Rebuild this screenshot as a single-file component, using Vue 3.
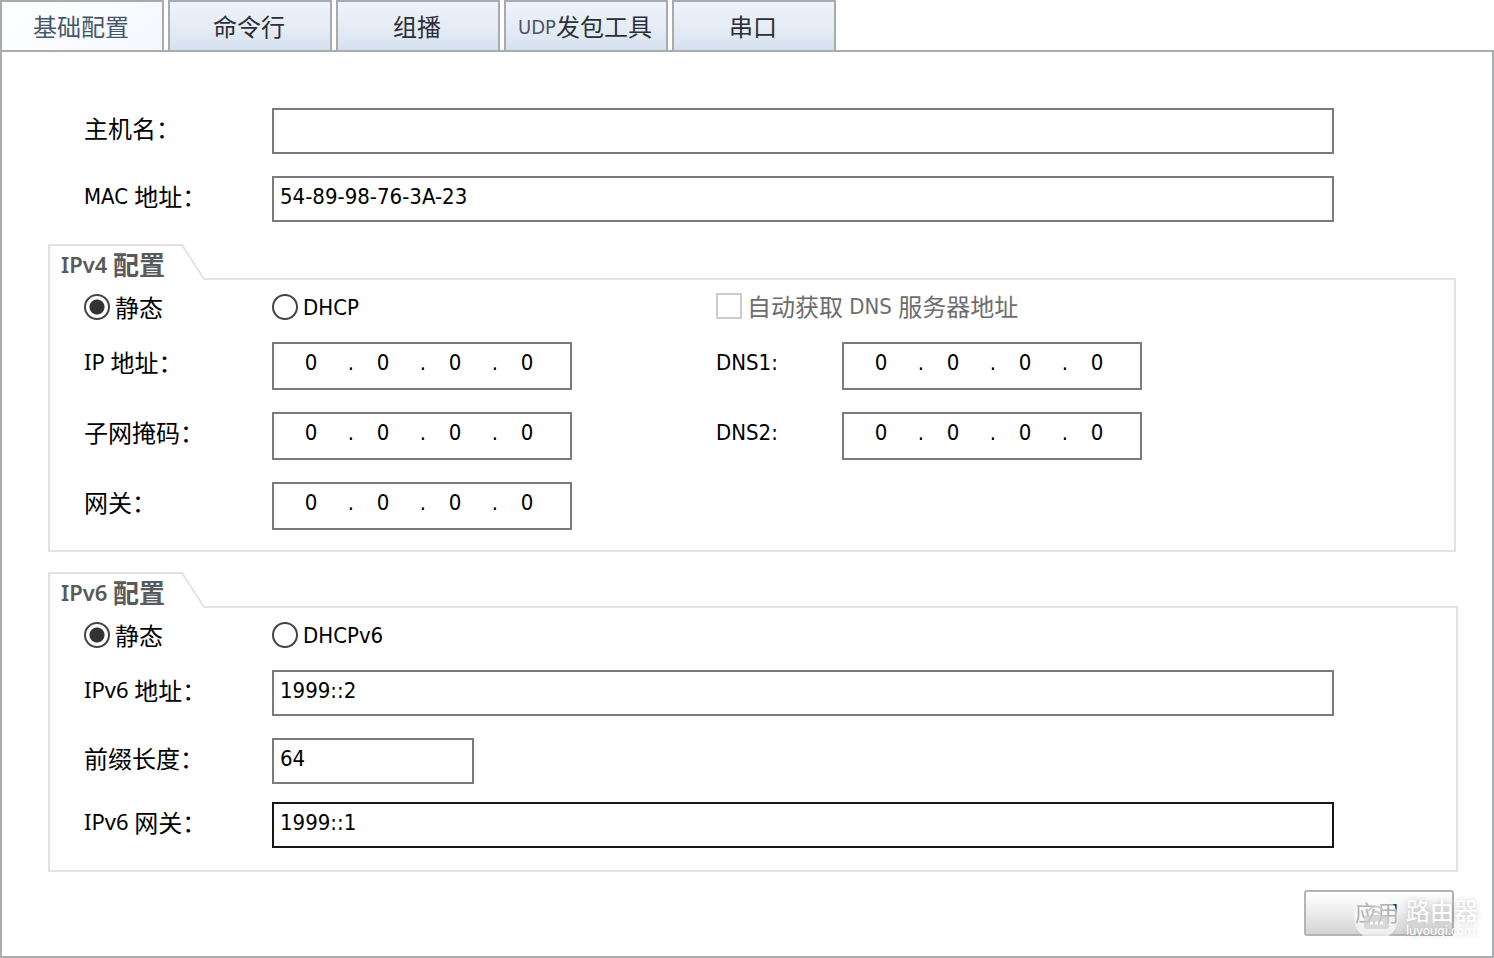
<script setup>
import { reactive, ref } from 'vue'

const tabs = [
  { latin: '', text: '基础配置' },
  { latin: '', text: '命令行' },
  { latin: '', text: '组播' },
  { latin: 'UDP', text: '发包工具' },
  { latin: '', text: '串口' },
]
const activeTab = ref(0)

const form = reactive({
  host: '',
  mac: '54-89-98-76-3A-23',
  v4Mode: 'static',
  autoDns: false,
  v6Mode: 'static',
  v6Address: '1999::2',
  v6Prefix: '64',
  v6Gateway: '1999::1',
})

const v4Fields = reactive([
  { id: 'ip', latin: 'IP ', text: '地址：', value: ['0', '0', '0', '0'] },
  { id: 'dns1', latin: 'DNS1:', text: '', value: ['0', '0', '0', '0'] },
  { id: 'mask', latin: '', text: '子网掩码：', value: ['0', '0', '0', '0'] },
  { id: 'dns2', latin: 'DNS2:', text: '', value: ['0', '0', '0', '0'] },
  { id: 'gateway', latin: '', text: '网关：', value: ['0', '0', '0', '0'] },
])
</script>

<template>
  <div class="page">
    <nav class="tabs">
      <button
        v-for="(tab, i) in tabs"
        :key="tab.text"
        type="button"
        class="tab"
        :class="{ active: i === activeTab }"
        @click="activeTab = i"
      ><span v-if="tab.latin" class="latin">{{ tab.latin }}</span>{{ tab.text }}</button>
    </nav>

    <form class="panel" @submit.prevent>
      <div class="rows general">
        <div class="row">
          <label for="host">主机名：</label>
          <input id="host" v-model="form.host" class="field" type="text">
        </div>
        <div class="row">
          <label for="mac"><span class="latin">MAC </span>地址：</label>
          <input id="mac" v-model="form.mac" class="field" type="text">
        </div>
      </div>

      <section class="group narrow">
        <div class="group-head">
          <h2 class="group-tab">
            <svg class="outline" viewBox="0 0 157 36" aria-hidden="true"><path d="M1 36V1H134L156 35H157" /></svg>
            <span class="title"><span class="serifed">IPv4 </span>配置</span>
          </h2>
        </div>
        <div class="group-body v4">
          <label class="choice"><input v-model="form.v4Mode" type="radio" name="v4" value="static">静态</label>
          <label class="choice"><input v-model="form.v4Mode" type="radio" name="v4" value="dhcp"><span class="latin">DHCP</span></label>
          <label class="choice dim"><input v-model="form.autoDns" type="checkbox" disabled><span>自动获取<span class="latin"> DNS </span>服务器地址</span></label>
          <template v-for="f in v4Fields" :key="f.id">
            <label :for="f.id"><span v-if="f.latin" :class="f.id === 'ip' ? 'serifed' : 'latin'">{{ f.latin }}</span>{{ f.text }}</label>
            <div class="ip-box">
              <template v-for="(part, i) in f.value" :key="i">
                <span v-if="i" class="dot">.</span>
                <input :id="i ? `${f.id}-${i}` : f.id" v-model="f.value[i]" type="text" maxlength="3" :aria-label="`${f.latin}${f.text} ${i + 1}`">
              </template>
            </div>
          </template>
        </div>
      </section>

      <section class="group">
        <div class="group-head">
          <h2 class="group-tab">
            <svg class="outline" viewBox="0 0 157 36" aria-hidden="true"><path d="M1 36V1H134L156 35H157" /></svg>
            <span class="title"><span class="serifed">IPv6 </span>配置</span>
          </h2>
        </div>
        <div class="group-body v6">
          <div class="modes">
            <label class="choice"><input v-model="form.v6Mode" type="radio" name="v6" value="static">静态</label>
            <label class="choice"><input v-model="form.v6Mode" type="radio" name="v6" value="dhcp"><span class="latin">DHCPv6</span></label>
          </div>
          <div class="rows">
            <div class="row">
              <label for="v6-address"><span class="serifed">IPv6 </span>地址：</label>
              <input id="v6-address" v-model="form.v6Address" class="field" type="text">
            </div>
            <div class="row">
              <label for="v6-prefix">前缀长度：</label>
              <input id="v6-prefix" v-model="form.v6Prefix" class="field short" type="text">
            </div>
            <div class="row">
              <label for="v6-gateway"><span class="serifed">IPv6 </span>网关：</label>
              <input id="v6-gateway" v-model="form.v6Gateway" class="field current" type="text">
            </div>
          </div>
        </div>
      </section>

      <div class="actions">
        <button type="submit" class="apply">应用</button>
        <div class="brand">
          <svg class="badge" viewBox="0 0 44 44" aria-hidden="true">
            <circle cx="22" cy="22" r="22" fill="#fff" fill-opacity=".62" />
            <rect x="10" y="19" width="25" height="14" rx="3" fill="#ccc" fill-opacity=".7" />
            <path d="M14 15Q22 6 30 15M18 18Q22 13 26 18" fill="none" stroke="#ccc" stroke-width="2" />
            <path d="M16 27h3M21 27h3M26 27h3" stroke="#fff" stroke-width="3" />
          </svg>
          <div class="brand-text"><span class="brand-name">路由器</span><span class="brand-url">luyouqi.com</span></div>
        </div>
      </div>
    </form>
  </div>
</template>

<style>
body {
  margin: 0;
  background: #fff;
}
</style>

<style scoped>
.page {
  box-sizing: border-box;
  min-height: 100vh;
  display: flex;
  flex-direction: column;
  font-family: "Noto Sans CJK SC", sans-serif;
  font-size: 24px;
  line-height: 32px;
  color: #000;
  background: #fff;
}
.page * {
  box-sizing: border-box;
}
.latin,
.serifed {
  font-family: "DejaVu Sans Condensed", "DejaVu Sans", sans-serif;
  font-size: 22px;
  line-height: 24px;
  vertical-align: 2px;
  white-space: pre;
}
.serifed {
  font-family: "Noto Sans", sans-serif;
}
.tabs {
  display: flex;
  gap: 4px;
}
.tab {
  width: 164px;
  height: 50px;
  padding: 0 2px 0 0;
  border: 2px solid #a7abae;
  border-bottom: 0;
  background: linear-gradient(#eef3fb, #e4ebf4 60%, #d5e1f0);
  color: #2b3038;
  font: inherit;
  white-space: nowrap;
}
.tab.active {
  background: linear-gradient(135deg, #fff, #f4f8fd);
  color: #43586c;
}
.tab .latin {
  font-size: 20px;
  color: #4a5568;
}
.panel {
  flex: 1;
  border: 2px solid #a9adb0;
  padding: 56px 34px 18px 46px;
}
.rows {
  display: flex;
  flex-direction: column;
  gap: 22px;
}
.general {
  padding: 0 124px 0 36px;
  margin-bottom: 22px;
}
.row {
  display: flex;
}
.row label {
  flex: 0 0 188px;
  padding-top: 4px;
}
.field {
  flex: 1;
  min-width: 0;
  height: 46px;
  padding: 0 6px 6px;
  border: 2px solid #7a7a7a;
  border-radius: 0;
  outline: 0;
  background: #fff;
  color: #000;
  font-family: "DejaVu Sans Condensed", "DejaVu Sans", sans-serif;
  font-size: 22px;
}
.field.short {
  flex: 0 0 202px;
}
.field.current {
  border-color: #17171a;
}
.group {
  margin-bottom: 20px;
}
.group.narrow {
  margin-right: 2px;
}
.group-head {
  display: flex;
}
.group-head::after {
  content: "";
  flex: 1;
  border-bottom: 2px solid #e3e3e3;
}
.group-tab {
  position: relative;
  width: 157px;
  height: 36px;
  margin: 0;
  padding: 4px 0 0 13px;
  font-size: 26px;
  line-height: 32px;
  font-weight: 700;
  color: #5a5a5a;
  white-space: nowrap;
}
.group-tab .serifed {
  font-weight: 600;
}
.outline {
  position: absolute;
  inset: 0;
  width: 157px;
  height: 36px;
  fill: none;
  stroke: #e3e3e3;
  stroke-width: 2;
}
.group-body {
  border: 2px solid #e3e3e3;
  border-top: 0;
  padding: 0 122px 20px 34px;
}
.v4 {
  display: grid;
  grid-template-columns: 188px 444px 126px 300px;
  grid-template-rows: 40px;
  row-gap: 22px;
}
.v4 > label:not(.choice) {
  padding-top: 4px;
}
.choice {
  display: flex;
  align-items: center;
  white-space: nowrap;
}
.choice > .latin {
  padding-top: 2px;
}
.v4 > .choice {
  padding-top: 14px;
}
.v4 > .dim {
  grid-column: span 2;
  padding-top: 12px;
  color: #6d6d6d;
}
.choice input {
  appearance: none;
  width: 26px;
  height: 26px;
  margin: 0 5px 0 0;
  border: 2px solid #444;
  border-radius: 50%;
  background: #fff;
}
.choice input:checked {
  background: radial-gradient(circle, #333 7px, #fff 8px);
}
.choice input[type="checkbox"] {
  border-color: #ccc;
  border-radius: 0;
}
.ip-box {
  display: flex;
  align-items: center;
  width: 300px;
  height: 48px;
  padding: 0 0 6px 9px;
  border: 2px solid #7a7a7a;
  background: #fff;
  font-family: "DejaVu Sans Condensed", "DejaVu Sans", sans-serif;
  font-size: 22px;
}
.ip-box input {
  width: 64px;
  height: 32px;
  padding: 0 8px 0 0;
  border: 0;
  outline: 0;
  background: transparent;
  color: #000;
  font: inherit;
  text-align: center;
}
.dot {
  width: 8px;
  text-align: center;
}
.v6 {
  padding-bottom: 22px;
}
.modes {
  display: grid;
  grid-template-columns: 188px 1fr;
  height: 54px;
  margin-bottom: 8px;
}
.v6 .row:last-child {
  margin-top: -4px;
}
.actions {
  position: relative;
  display: flex;
  justify-content: flex-end;
  margin-top: -2px;
  padding-right: 4px;
}
.apply {
  width: 150px;
  height: 46px;
  padding: 0 4px 4px 0;
  border: 2px solid #b4b4b4;
  border-radius: 3px;
  background: linear-gradient(#fff, #ececec 50%, #d2d2d2);
  color: #333;
  font: inherit;
  font-size: 22px;
}
.brand {
  position: absolute;
  right: -20px;
  top: 6px;
  display: flex;
  gap: 8px;
  color: #fff;
  text-shadow: 0 0 6px rgba(0, 0, 0, .25);
  pointer-events: none;
}
.badge {
  width: 44px;
  height: 44px;
}
.brand-text {
  display: flex;
  flex-direction: column;
}
.brand-name {
  font-size: 24px;
  line-height: 28px;
}
.brand-url {
  font-family: "Noto Sans", sans-serif;
  font-size: 12px;
  line-height: 14px;
}
</style>
